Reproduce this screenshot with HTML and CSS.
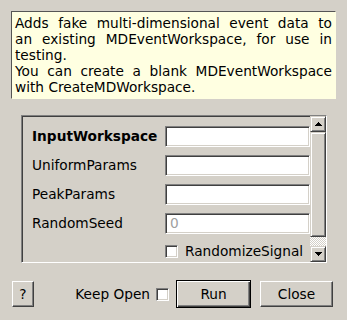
FILE: index.html
```html
<!DOCTYPE html>
<html>
<head>
<meta charset="utf-8">
<link rel="stylesheet" href="styles.css">
</head>
<body>
<div class="dialog">
  <div class="desc">
    <div class="line just">Adds fake multi-dimensional event data to</div>
    <div class="line just">an existing MDEventWorkspace, for use in</div>
    <div class="line">testing.</div>
    <div class="line just">You can create a blank MDEventWorkspace</div>
    <div class="line">with CreateMDWorkspace.</div>
  </div>
  <div class="frame">
    <div class="props">
      <div class="label bold">InputWorkspace</div><div class="input"></div>
      <div class="label">UniformParams</div><div class="input"></div>
      <div class="label">PeakParams</div><div class="input"></div>
      <div class="label">RandomSeed</div><div class="input"><span class="placeholder">0</span></div>
      <div class="label"></div>
      <div class="check-row"><span class="checkbox"></span><span>RandomizeSignal</span></div>
    </div>
    <div class="scrollbar">
      <div class="sb-btn"><svg width="7" height="4" viewBox="0 0 7 4"><path d="M3 0h1v1h1v1h1v1h1v1H0V3h1V2h1V1h1z" fill="#000"/></svg></div>
      <div class="sb-thumb"></div>
      <div class="sb-track"></div>
      <div class="sb-btn"><svg width="7" height="4" viewBox="0 0 7 4"><path d="M0 0h7v1H6v1H5v1H4v1H3V3H2V2H1V1H0z" fill="#000"/></svg></div>
    </div>
  </div>
  <div class="buttons">
    <button class="btn help">?</button>
    <div class="spacer"></div>
    <span class="keep">Keep Open</span>
    <span class="checkbox keep-box"></span>
    <button class="btn run">Run</button>
    <button class="btn close">Close</button>
  </div>
</div>
</body>
</html>
```

FILE: styles.css
```css
html, body {
  margin: 0;
  padding: 0;
  background: #d4d0c8;
}
body {
  width: 347px;
  height: 320px;
  overflow: hidden;
  font-family: "DejaVu Sans", sans-serif;
  font-size: 13.7px;
  color: #000;
}
.dialog {
  display: flex;
  flex-direction: column;
  padding: 11px 11px 0 11px;
}
.desc {
  background: #ffffe1;
  border-top: 1px solid #555;
  border-left: 1px solid #555;
  border-right: 1px solid #ffffe1;
  border-bottom: 1px solid #ffffe1;
  padding: 3px 3px 3px 3px;
  line-height: 16px;
}
.line { white-space: nowrap; }
.just {
  text-align: justify;
  text-align-last: justify;
}
.frame {
  margin: 16px 9px 0 10px;
  height: 148px;
  box-sizing: border-box;
  border-top: 1px solid #808080;
  border-left: 1px solid #808080;
  border-right: 1px solid #fff;
  border-bottom: 1px solid #fff;
  box-shadow: inset 1px 1px 0 #404040, inset -1px -1px 0 #d4d0c8;
  padding: 1px;
  display: flex;
}
.props {
  flex: 1;
  display: grid;
  grid-template-columns: 133px 1fr;
  grid-template-rows: 21px 21px 21px 21px 18px;
  row-gap: 8px;
  padding: 9px 0 0 9px;
  align-items: center;
}
.label {
  line-height: 21px;
  white-space: nowrap;
}
.bold { font-weight: bold; }
.input {
  height: 21px;
  box-sizing: border-box;
  background: #fff;
  border-top: 1px solid #808080;
  border-left: 1px solid #808080;
  border-right: 1px solid #fff;
  border-bottom: 1px solid #fff;
  box-shadow: inset 1px 1px 0 #404040, inset -1px -1px 0 #d4d0c8;
  padding: 0 4px;
  line-height: 19px;
}
.placeholder { color: #a0a0a0; }
.check-row {
  display: flex;
  align-items: center;
  gap: 7px;
  height: 18px;
}
.checkbox {
  display: inline-block;
  width: 13px;
  height: 13px;
  box-sizing: border-box;
  background: #fff;
  border-top: 1px solid #808080;
  border-left: 1px solid #808080;
  border-right: 1px solid #fff;
  border-bottom: 1px solid #fff;
  box-shadow: inset 1px 1px 0 #404040, inset -1px -1px 0 #d4d0c8;
  flex: none;
}
.scrollbar {
  width: 16px;
  display: flex;
  flex-direction: column;
  margin: -1px -1px -1px 0;
}
.sb-btn {
  height: 16px;
  box-sizing: border-box;
  background: #d4d0c8;
  border-top: 1px solid #d4d0c8;
  border-left: 1px solid #d4d0c8;
  border-right: 1px solid #404040;
  border-bottom: 1px solid #404040;
  box-shadow: inset 1px 1px 0 #fff, inset -1px -1px 0 #808080;
  display: flex;
  align-items: center;
  justify-content: center;
  flex: none;
}
.sb-thumb {
  flex: 1;
  box-sizing: border-box;
  background: #d4d0c8;
  border-top: 1px solid #d4d0c8;
  border-left: 1px solid #d4d0c8;
  border-right: 1px solid #404040;
  border-bottom: 1px solid #404040;
  box-shadow: inset 1px 1px 0 #fff, inset -1px -1px 0 #808080;
}
.sb-track {
  height: 9px;
  flex: none;
  background-color: #fff;
  background-image: repeating-conic-gradient(#d4d0c8 0 25%, #fff 0 50%);
  background-size: 2px 2px;
}
.buttons {
  display: flex;
  align-items: center;
  margin: 17px 3px 0 1px;
  height: 28px;
}
.spacer { flex: 1; }
.btn {
  font-family: "DejaVu Sans", sans-serif;
  font-size: 13.7px;
  color: #000;
  background: #d4d0c8;
  box-sizing: border-box;
  border-top: 1px solid #fff;
  border-left: 1px solid #fff;
  border-right: 1px solid #404040;
  border-bottom: 1px solid #404040;
  box-shadow: inset -1px -1px 0 #808080;
  padding: 0;
  margin: 0;
  height: 26px;
}
.help { width: 22px; }
.keep { margin-right: 6px; }
.keep-box { margin-right: 7px; }
.run {
  width: 75px;
  height: 28px;
  border: 1px solid #000;
  box-shadow: inset 1px 1px 0 #fff, inset -1px -1px 0 #404040, inset -2px -2px 0 #808080;
  margin-right: 9px;
}
.close { width: 73px; }
```
